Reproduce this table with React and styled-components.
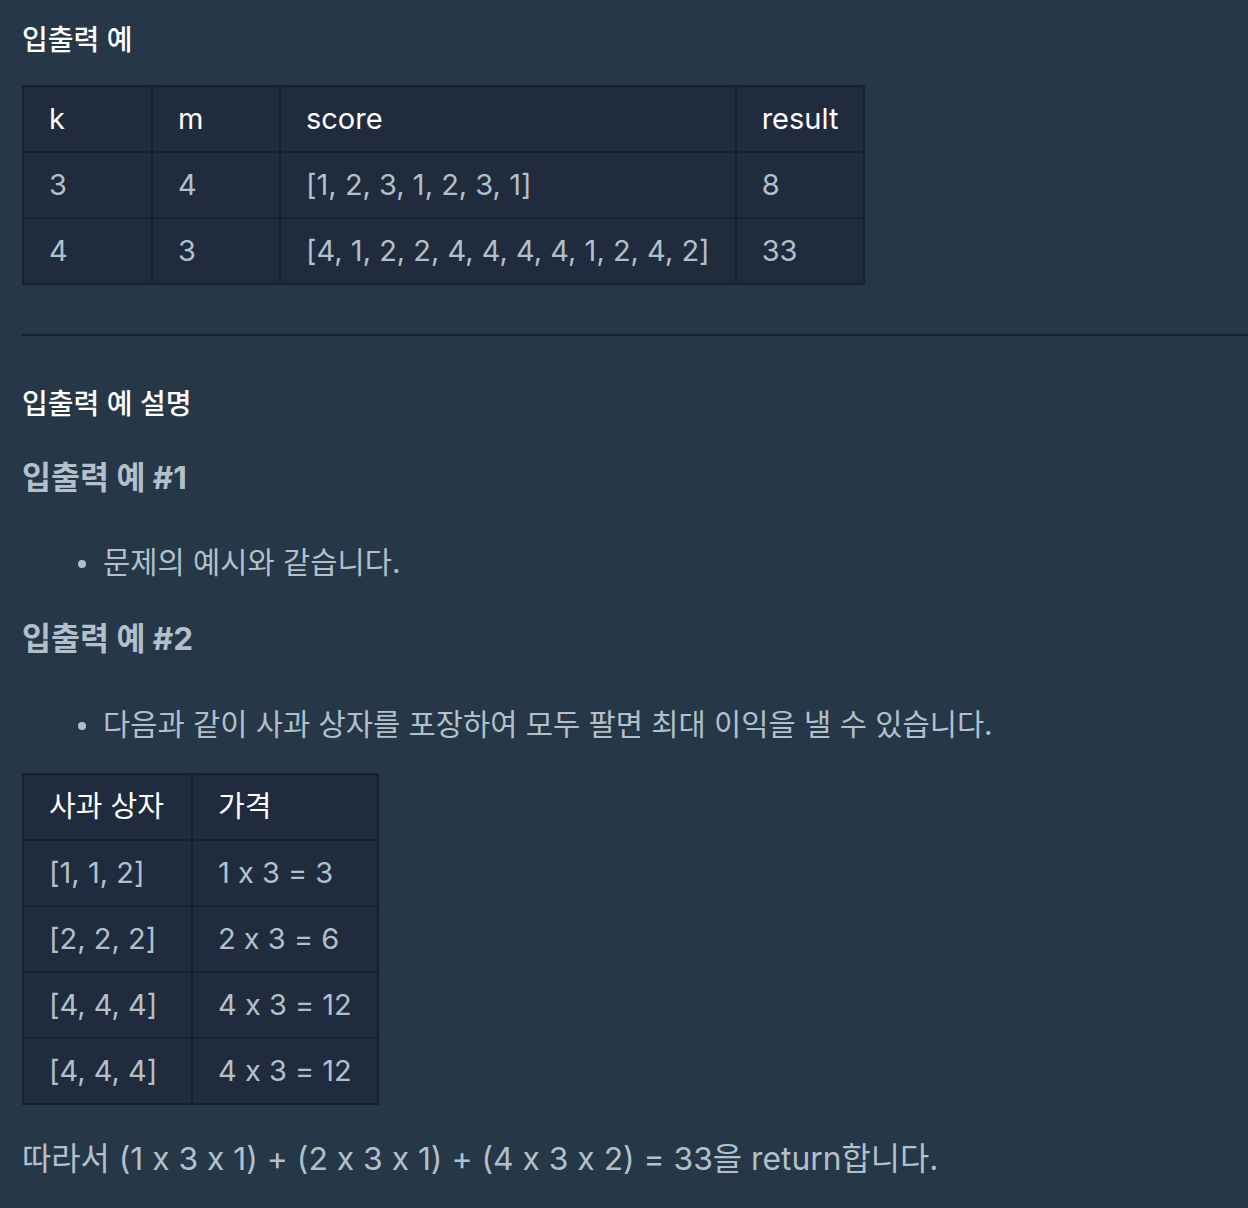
import styled, { createGlobalStyle } from 'styled-components'

const Global = createGlobalStyle`
  html, body {
    margin: 0;
    background-color: #263747;
  }
  body {
    font-family: Inter, "Noto Sans CJK KR", sans-serif;
    font-feature-settings: "calt" 0;
    -webkit-font-smoothing: antialiased;
  }
`

// ─── Layout ───────────────────────────────────────────────────────────────────

const Page = styled.div`
  padding: 20px 0 40px 22px;
  color: #b2c0cc;
  font-size: 29px;
  line-height: 40px;
`

const SectionTitle = styled.h5`
  margin: ${p => p.$mt || 0}px 0 0;
  font-size: 28px;
  font-weight: 500;
  line-height: 40px;
  color: #ffffff;
`

const ExampleTitle = styled.h6`
  margin: ${p => p.$mt || 0}px 0 0;
  font-size: 31.5px;
  font-weight: 700;
  line-height: 44px;
  color: #b2c0cc;
`

const Divider = styled.hr`
  margin: 49px 0 0;
  border: none;
  height: 2px;
  background-color: #172030;
`

// ─── Tables ───────────────────────────────────────────────────────────────────

const Table = styled.table`
  margin-top: ${p => p.$mt || 0}px;
  border-collapse: collapse;
  table-layout: fixed;
  background-color: #202b3d;
  border: 2px solid #172030;
`

const Th = styled.th`
  height: 66px;
  padding: 0 25px;
  border: 2px solid #172030;
  text-align: left;
  font-weight: 400;
  color: #ffffff;
  white-space: nowrap;
  box-sizing: border-box;
`

const Td = styled.td`
  height: 66px;
  padding: 0 25px;
  border: 2px solid #172030;
  color: #b2c0cc;
  white-space: nowrap;
  box-sizing: border-box;
`

// ─── Lists / paragraphs ───────────────────────────────────────────────────────

const List = styled.ul`
  list-style: none;
  margin: ${p => p.$mt || 0}px 0 0;
  padding: 0;
`

const Item = styled.li`
  position: relative;
  padding-left: 81px;
  font-size: 29.6px;

  &::before {
    content: '';
    position: absolute;
    left: 56px;
    top: 18px;
    width: 8px;
    height: 8px;
    border-radius: 50%;
    background-color: #b2c0cc;
  }
`

const Para = styled.p`
  margin: ${p => p.$mt || 0}px 0 0;
  font-size: 31.8px;
`

const first = {
  cols: [129, 128, 454, 127],
  head: ['k', 'm', 'score', 'result'],
  rows: [
    ['3', '4', '[1, 2, 3, 1, 2, 3, 1]', '8'],
    ['4', '3', '[4, 1, 2, 2, 4, 4, 4, 4, 1, 2, 4, 2]', '33'],
  ],
}

const second = {
  cols: [169, 186],
  head: ['사과 상자', '가격'],
  rows: [
    ['[1, 1, 2]', '1 x 3 = 3'],
    ['[2, 2, 2]', '2 x 3 = 6'],
    ['[4, 4, 4]', '4 x 3 = 12'],
    ['[4, 4, 4]', '4 x 3 = 12'],
  ],
}

function DataTable({ data, mt }) {
  return (
    <Table $mt={mt}>
      <colgroup>
        {data.cols.map((w, i) => <col key={i} style={{ width: w }} />)}
      </colgroup>
      <thead>
        <tr>{data.head.map(h => <Th key={h}>{h}</Th>)}</tr>
      </thead>
      <tbody>
        {data.rows.map((r, i) => (
          <tr key={i}>{r.map((c, j) => <Td key={j}>{c}</Td>)}</tr>
        ))}
      </tbody>
    </Table>
  )
}

export default function App() {
  return (
    <>
      <Global />
      <Page>
        <SectionTitle>입출력 예</SectionTitle>
        <DataTable data={first} mt={25} />

        <Divider />

        <SectionTitle $mt={48}>입출력 예 설명</SectionTitle>

        <ExampleTitle $mt={32}>입출력 예 #1</ExampleTitle>
        <List $mt={42}>
          <Item>문제의 예시와 같습니다.</Item>
        </List>

        <ExampleTitle $mt={35}>입출력 예 #2</ExampleTitle>
        <List $mt={43}>
          <Item>다음과 같이 사과 상자를 포장하여 모두 팔면 최대 이익을 낼 수 있습니다.</Item>
        </List>

        <DataTable data={second} mt={29} />

        <Para $mt={34}>따라서 (1 x 3 x 1) + (2 x 3 x 1) + (4 x 3 x 2) = 33을 return합니다.</Para>
      </Page>
    </>
  )
}
